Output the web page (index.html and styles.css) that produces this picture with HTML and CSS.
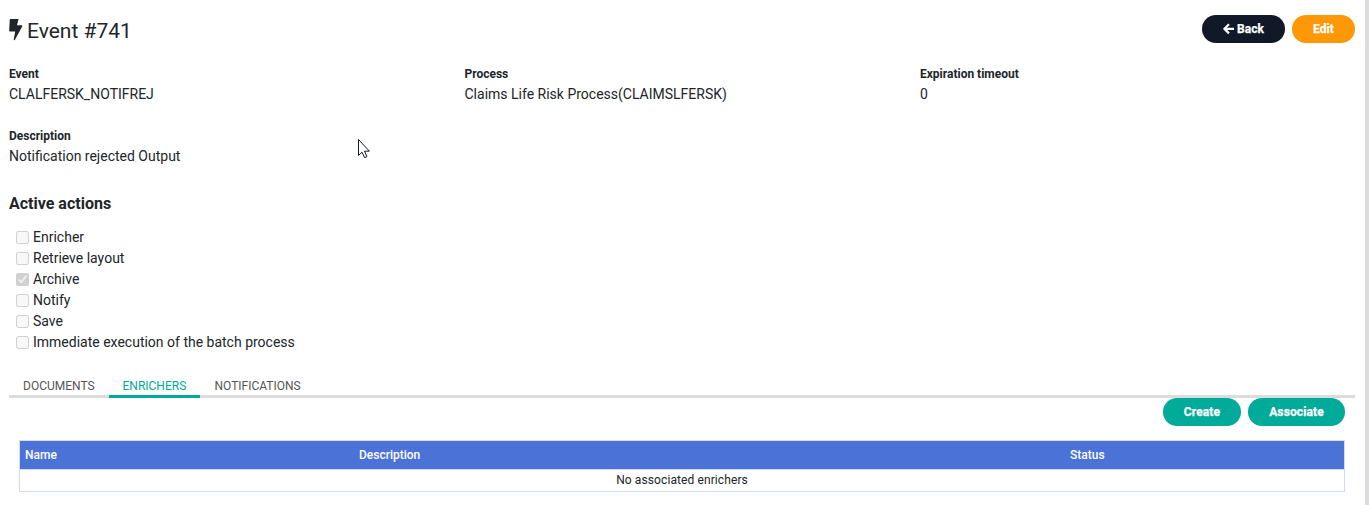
FILE: index.html
```html
<!DOCTYPE html>
<html lang="en">
<head>
<meta charset="utf-8">
<title>Event #741</title>
<link rel="stylesheet" href="styles.css">
</head>
<body>
<main class="page">
  <header class="header">
    <h1 class="title"><svg class="bolt" viewBox="0 0 14 22"><path d="M1.4 0H9.6L8 6.2H12.8Q13.7 6.6 13.2 7.5L5.8 21Q4.8 21.6 4.7 20.4L6.2 12.6H1Q0.2 12.4 0.2 11.5L0.7 0.7Q0.9 0 1.4 0Z"/></svg><span class="title-text">Event #741</span></h1>
    <div class="buttons">
      <button class="btn btn-dark"><svg class="arrow" viewBox="0 0 11 12"><path d="M6 1.2L1.4 5.8L6 10.4M1.5 5.8H11"/></svg><span>Back</span></button>
      <button class="btn btn-orange">Edit</button>
    </div>
  </header>
  <dl class="details">
    <div class="field"><dt>Event</dt><dd>CLALFERSK_NOTIFREJ</dd></div>
    <div class="field"><dt>Process</dt><dd>Claims Life Risk Process(CLAIMSLFERSK)</dd></div>
    <div class="field"><dt>Expiration timeout</dt><dd>0</dd></div>
    <div class="field"><dt>Description</dt><dd>Notification rejected Output</dd></div>
  </dl>
  <h2 class="subtitle">Active actions</h2>
  <div class="actions">
    <label class="check"><input type="checkbox" disabled><span>Enricher</span></label>
    <label class="check"><input type="checkbox" disabled><span>Retrieve layout</span></label>
    <label class="check"><input type="checkbox" disabled checked><span>Archive</span></label>
    <label class="check"><input type="checkbox" disabled><span>Notify</span></label>
    <label class="check"><input type="checkbox" disabled><span>Save</span></label>
    <label class="check"><input type="checkbox" disabled><span>Immediate execution of the batch process</span></label>
  </div>
  <nav class="tabs">
    <a class="tab tab-documents">DOCUMENTS</a>
    <a class="tab tab-enrichers active">ENRICHERS</a>
    <a class="tab tab-notifications">NOTIFICATIONS</a>
  </nav>
  <section class="panel">
    <div class="buttons panel-buttons">
      <button class="btn btn-create">Create</button>
      <button class="btn btn-associate">Associate</button>
    </div>
    <table class="table">
      <thead><tr><th class="col-name">Name</th><th class="col-description">Description</th><th>Status</th></tr></thead>
      <tbody><tr><td colspan="3">No associated enrichers</td></tr></tbody>
    </table>
  </section>
</main>
<svg class="cursor" viewBox="0 0 12 20"><path d="M0.5 0.5V16.5L4 13.2L6.6 18.6L8.9 17.7L6.5 12.2H11.4Z"/></svg>
</body>
</html>
```
FILE: styles.css
```css
* { box-sizing: border-box; }
body {
  margin: 0;
  height: 505px;
  overflow: hidden;
  background: #fff;
  color: #212529;
  font-family: Roboto, sans-serif;
  font-size: 14px;
  line-height: 21px;
}
.page {
  height: 505px;
  padding: 15px 10px 0 9px;
  border-right: 4px solid #dcdcdc;
}
.header { display: flex; justify-content: space-between; height: 28px; }
.title {
  display: flex;
  align-items: center;
  gap: 4px;
  margin: 0;
  font-size: 21px;
  font-weight: 400;
  line-height: 32px;
  height: 32px;
}
.title-text { width: 106px; white-space: nowrap; }
.bolt { width: 14px; height: 22px; fill: #212529; margin-top: -2px; }
.buttons { display: flex; gap: 7px; }
.btn {
  display: flex;
  align-items: center;
  justify-content: center;
  height: 28px;
  padding: 0;
  border: 0;
  border-radius: 14px;
  color: #fff;
  font: 700 12px/18px Roboto, sans-serif;
  letter-spacing: 0.12px;
  -webkit-text-stroke: 0.25px #fff;
}
.btn-dark { width: 83px; gap: 3px; background: #111827; }
.btn-orange { width: 63px; background: #ff9806; }
.btn-create { width: 78px; background: #00ab9a; }
.btn-associate { width: 97px; background: #00ab9a; }
.arrow { width: 11px; height: 12px; fill: none; stroke: #fff; stroke-width: 2.2; }
.details {
  display: grid;
  grid-template-columns: repeat(3, 455.5px);
  row-gap: 22px;
  margin: 22px 0 0;
}
.field { height: 40px; white-space: nowrap; }
dt { font-size: 12px; font-weight: 700; line-height: 18px; }
dd { margin: 1px 0 0; }
.subtitle { margin: 26px 0 0; font-size: 16px; font-weight: 700; line-height: 21px; }
.actions { padding: 13px 0 0 7px; }
.check { display: flex; align-items: center; gap: 4px; height: 21px; }
.check input { width: 13px; height: 13px; margin: 0; }
.tabs {
  display: flex;
  height: 26px;
  margin-top: 19px;
  background: linear-gradient(#dcdcdc, #dcdcdc) bottom / 100% 3px no-repeat;
}
.tab {
  padding: 5px 0 0 14px;
  color: #555;
  font-size: 12px;
  line-height: 18px;
}
.tab-documents { width: 100px; }
.tab-enrichers { width: 91px; padding-left: 13.5px; }
.tab-notifications { padding-left: 14.5px; }
.tab.active { border-bottom: 3px solid #00ab9a; color: #00ab9a; }
.panel { padding: 0 10px; }
.panel-buttons { justify-content: flex-end; }
.table {
  width: 100%;
  margin-top: 14px;
  border-collapse: separate;
  border-spacing: 0;
  border: 1px solid #d5dbf5;
  table-layout: fixed;
  font-size: 12px;
  line-height: 18px;
}
.table th {
  height: 29px;
  padding: 0 5px;
  border-bottom: 1px solid #d5dbf5;
  background: #4b72d6;
  color: #fff;
  font-weight: 500;
  text-align: left;
}
.table td { height: 21px; padding: 0 0 2px; text-align: center; letter-spacing: 0.1px; }
.col-name { width: 334px; }
.col-description { width: 711px; }
.cursor {
  position: absolute;
  left: 358px;
  top: 139px;
  width: 12px;
  height: 20px;
  fill: #fff;
  stroke: #111827;
  stroke-width: 1;
}
```
